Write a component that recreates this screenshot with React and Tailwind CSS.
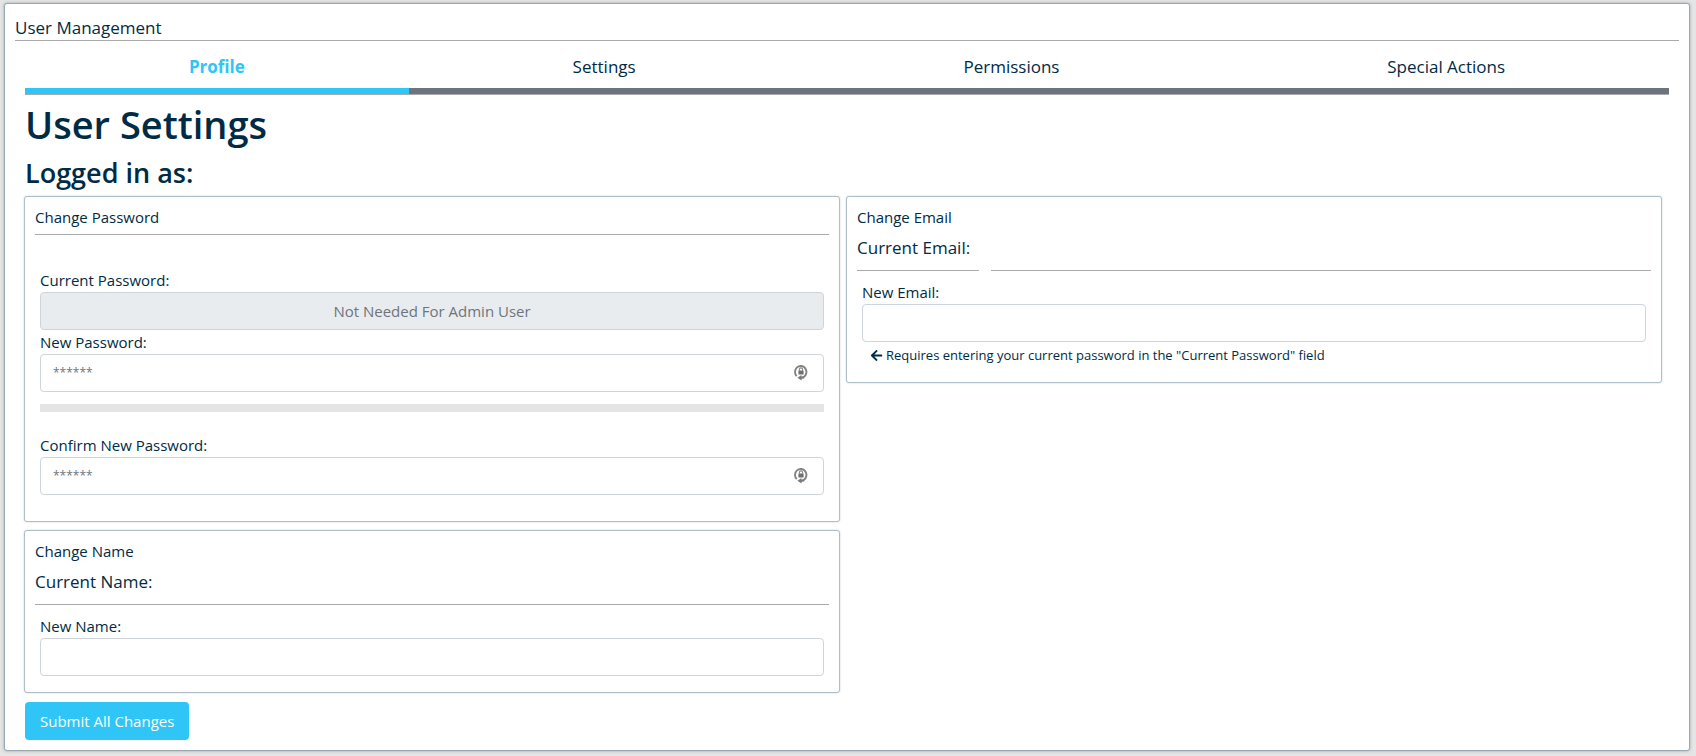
import { useState } from "react";
import { FaArrowLeft } from "react-icons/fa";

const TABS = ["Profile", "Settings", "Permissions", "Special Actions"];

const FIELD =
  "block h-[38px] w-full rounded-[4px] border border-[#ced4da] bg-white px-3 text-[15px] text-[#495057] outline-none placeholder:text-[#6c757d] focus:border-[#30c5f7]";

function GeneratePasswordIcon() {
  return (
    <svg viewBox="0 0 14 17" className="h-[17px] w-[14px]" fill="none" aria-hidden="true">
      <path d="M2.7 12.2A5.7 6 0 1 1 9.8 13" stroke="#828282" strokeWidth="1.9" />
      <path d="M3.4 13.8 7.4 10.9v1.5l2.8-.5v2.5l-2.6.4v1.7z" fill="#7a7a7a" />
      <rect x="4.4" y="6.5" width="5.2" height="4.1" rx=".5" fill="#707070" />
      <path d="M5.4 6.8V5.5a1.6 1.6 0 0 1 3.2 0v1.3" stroke="#858585" strokeWidth="1.1" />
    </svg>
  );
}

function Panel({ title, className = "", children }) {
  return (
    <section
      className={`rounded-[3px] border border-[#b0bec5] bg-white px-[10px] pt-[10px] shadow-[0_0_2px_rgba(120,144,156,0.4)] ${className}`}
    >
      <h3 className="text-[15px] leading-5">{title}</h3>
      {children}
    </section>
  );
}

function Field({ id, label, children, ...input }) {
  return (
    <div>
      <label htmlFor={id} className="block text-[15px] leading-6">
        {label}
      </label>
      <div className="relative">
        <input id={id} className={FIELD} {...input} />
        {children}
      </div>
    </div>
  );
}

function PasswordField(props) {
  return (
    <Field
      type="password"
      placeholder="******"
      className={`${FIELD} pb-1 placeholder:text-[12px]`}
      {...props}
    >
      <button type="button" aria-label="Generate password" className="absolute top-[10px] right-4">
        <GeneratePasswordIcon />
      </button>
    </Field>
  );
}

export default function App() {
  const [active, setActive] = useState("Profile");

  return (
    <div className="min-h-screen bg-[#e5e5e5] pt-[3px] pr-[6px] pb-[5px] pl-[4px] font-['Open_Sans','Noto_Sans',sans-serif] text-[#002b45]">
      <main className="rounded-[3px] border border-[#9aa8b0] bg-white p-[10px] shadow-[0_0_3px_rgba(80,100,115,0.5)]">
        <header className="border-b border-[#aaaaaa] pt-[2px]">
          <h1 className="text-[17px] leading-6">User Management</h1>
        </header>

        <div className="px-[10px]">
          <nav className="flex border-b border-[#aaaaaa]" role="tablist">
            {TABS.map((tab) => (
              <button
                key={tab}
                type="button"
                role="tab"
                aria-selected={active === tab}
                onClick={() => setActive(tab)}
                className={`flex-auto cursor-pointer border-b-[6px] pt-[13px] pb-[8px] text-[17px] leading-[26px] ${
                  active === tab ? "border-[#30c5f7] font-bold text-[#30c5f7]" : "border-[#6c757d]"
                }`}
              >
                {tab}
              </button>
            ))}
          </nav>

          <form onSubmit={(e) => e.preventDefault()}>
            <h2 className="pt-[5px] text-[38px] leading-[48px] font-semibold">User Settings</h2>
            <h3 className="mt-2 mb-[6px] text-[27px] leading-[34px] font-semibold">Logged in as:</h3>

            <div className="-ml-px mr-[7px] grid grid-cols-2 items-start gap-x-[6px]">
              <div className="flex flex-col gap-2">
                <Panel title="Change Password" className="pb-[26px]">
                  <hr className="mt-[7px] border-[#aaaaaa]" />
                  <div className="px-[5px] pt-[33px]">
                    <Field
                      id="current-password"
                      label="Current Password:"
                      type="password"
                      placeholder="Not Needed For Admin User"
                      disabled
                      className={`${FIELD} bg-[#e9ecef]! text-center`}
                    />
                    <PasswordField id="new-password" label="New Password:" />
                    <div className="mt-3 mb-[21px] h-2 bg-[#e4e4e4]" />
                    <PasswordField id="confirm-password" label="Confirm New Password:" />
                  </div>
                </Panel>

                <Panel title="Change Name" className="pb-4">
                  <p className="mt-2 text-[17px] leading-[26px]">Current Name:</p>
                  <hr className="mt-[9px] border-[#aaaaaa]" />
                  <div className="px-[5px] pt-[9px]">
                    <Field id="new-name" label="New Name:" type="text" />
                  </div>
                </Panel>
              </div>

              <Panel title="Change Email" className="pb-4">
                <p className="mt-2 text-[17px] leading-[26px]">Current Email:</p>
                <div className="mt-[9px] flex gap-3">
                  <hr className="w-[122px] border-[#aaaaaa]" />
                  <hr className="flex-1 border-[#aaaaaa]" />
                </div>
                <div className="px-[5px] pt-[9px]">
                  <Field id="new-email" label="New Email:" type="email" />
                  <p className="flex items-center gap-[3px] pt-[2px] pl-2 text-[13px] leading-[22px]">
                    <FaArrowLeft className="size-[13px]" />
                    Requires entering your current password in the "Current Password" field
                  </p>
                </div>
              </Panel>
            </div>

            <button
              type="submit"
              className="mt-[9px] block h-[38px] cursor-pointer rounded-[4px] bg-[#30c5f7] px-[15px] text-[15px] text-white"
            >
              Submit All Changes
            </button>
          </form>
        </div>
      </main>
    </div>
  );
}
